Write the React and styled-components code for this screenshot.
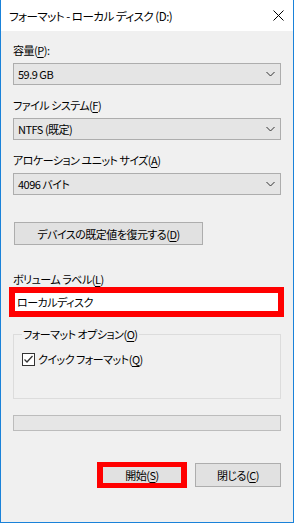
import React from 'react'
import styled, { createGlobalStyle } from 'styled-components'

const GlobalStyle = createGlobalStyle`
  html, body {
    margin: 0;
    padding: 0;
    background: #f0f0f0;
  }
  body {
    font-family: "Noto Sans CJK JP", "Noto Sans", sans-serif;
    font-size: 11px;
    color: #000;
  }
  u { text-decoration: underline; text-underline-offset: 2px; }
`

const Window = styled.div`
  width: 294px;
  height: 523px;
  box-sizing: border-box;
  border: 1px solid #1a82d9;
  border-top: none;
  background: #f0f0f0;
  display: flex;
  flex-direction: column;
  font-feature-settings: "palt";
  letter-spacing: -0.5px;
`

const TitleBar = styled.div`
  height: 31px;
  flex-shrink: 0;
  background: #fff;
  display: flex;
  align-items: center;
  justify-content: space-between;
  padding: 0 9px 0 8px;
  line-height: 16px;
  font-size: 11.5px;
`

const Body = styled.div`
  flex: 1;
  display: flex;
  flex-direction: column;
  padding: 11px 12px 0 12px;
`

const Label = styled.div`
  height: 16px;
  line-height: 16px;
  margin-top: ${p => p.$top || 0}px;
  white-space: nowrap;
`

const Combo = styled.div`
  height: 22px;
  box-sizing: border-box;
  margin-top: 5px;
  border: 1px solid #adadad;
  background: #e5e5e5;
  display: flex;
  align-items: center;
  justify-content: space-between;
  padding: 0 5px 0 4px;
  line-height: 16px;
`

const PushButton = styled.div`
  height: ${p => p.$h || 23}px;
  width: ${p => p.$w}px;
  box-sizing: border-box;
  border: 1px solid #adadad;
  background: #e1e1e1;
  display: flex;
  align-items: center;
  justify-content: center;
  line-height: 16px;
  white-space: nowrap;
  margin-left: ${p => p.$left || 0}px;
  margin-top: ${p => p.$top || 0}px;
`

const Highlight = styled.div`
  border: solid #ff0000;
  border-width: ${p => p.$bw};
  margin: ${p => p.$m || 0};
`

const TextBox = styled.div`
  height: 18px;
  background: #fff;
  line-height: 18px;
  padding-left: 2px;
`

const Group = styled.fieldset`
  margin: 9px 0 0 0;
  padding: 9px 8px 31px 8px;
  border: 1px solid #dcdcdc;
  min-width: 0;
`

const Legend = styled.legend`
  padding: 0 1px;
  line-height: 16px;
`

const CheckRow = styled.div`
  display: flex;
  align-items: center;
  gap: 3px;
  height: 16px;
  line-height: 16px;
`

const CheckBox = styled.div`
  width: 13px;
  height: 13px;
  box-sizing: border-box;
  border: 1px solid #333;
  background: #fff;
  display: flex;
  align-items: center;
  justify-content: center;
`

const Progress = styled.div`
  height: 16px;
  box-sizing: border-box;
  margin-top: 16px;
  border: 1px solid #bcbcbc;
  background: #e6e6e6;
`

const ButtonRow = styled.div`
  display: flex;
  justify-content: flex-end;
  align-items: center;
  margin-top: 31px;
  gap: 8px;
`

const StartInner = styled.div`
  width: 78px;
  height: 16px;
  background: #e1e1e1;
  display: flex;
  align-items: center;
  justify-content: center;
  line-height: 16px;
`

const Chevron = () => (
  <svg width="9" height="6" viewBox="0 0 9 6">
    <polyline points="0.5,1 4.5,5 8.5,1" fill="none" stroke="#333" strokeWidth="1" />
  </svg>
)

const CloseIcon = () => (
  <svg width="11" height="11" viewBox="0 0 11 11">
    <path d="M0.5 0.5 L10.5 10.5 M10.5 0.5 L0.5 10.5" stroke="#000" strokeWidth="1" />
  </svg>
)

const Check = () => (
  <svg width="11" height="11" viewBox="0 0 11 11">
    <polyline points="1.5,5.5 4,8 9.5,2" fill="none" stroke="#333" strokeWidth="1.3" />
  </svg>
)

export default function App() {
  return (
    <>
      <GlobalStyle />
      <Window>
        <TitleBar>
          <span>フォーマット - ローカル ディスク (D:)</span>
          <CloseIcon />
        </TitleBar>
        <Body>
          <Label>容量(<u>P</u>):</Label>
          <Combo><span>59.9 GB</span><Chevron /></Combo>

          <Label $top={12}>ファイル システム(<u>F</u>)</Label>
          <Combo><span>NTFS (既定)</span><Chevron /></Combo>

          <Label $top={12}>アロケーション ユニット サイズ(<u>A</u>)</Label>
          <Combo><span>4096 バイト</span><Chevron /></Combo>

          <PushButton $w={189} $left={1} $top={27}>
            デバイスの既定値を復元する(<u>D</u>)
          </PushButton>

          <Label $top={26}>ボリューム ラベル(<u>L</u>)</Label>
          <Highlight $bw="6px" $m="0 -3px 0 -4px">
            <TextBox>ローカルディスク</TextBox>
          </Highlight>

          <Group>
            <Legend>フォーマット オプション(<u>O</u>)</Legend>
            <CheckRow>
              <CheckBox><Check /></CheckBox>
              <span>クイック フォーマット(<u>Q</u>)</span>
            </CheckRow>
          </Group>

          <Progress />

          <ButtonRow>
            <Highlight $bw="5px 6px">
              <StartInner>開始(<u>S</u>)</StartInner>
            </Highlight>
            <PushButton $w={86} $h={24}>閉じる(<u>C</u>)</PushButton>
          </ButtonRow>
        </Body>
      </Window>
    </>
  )
}
